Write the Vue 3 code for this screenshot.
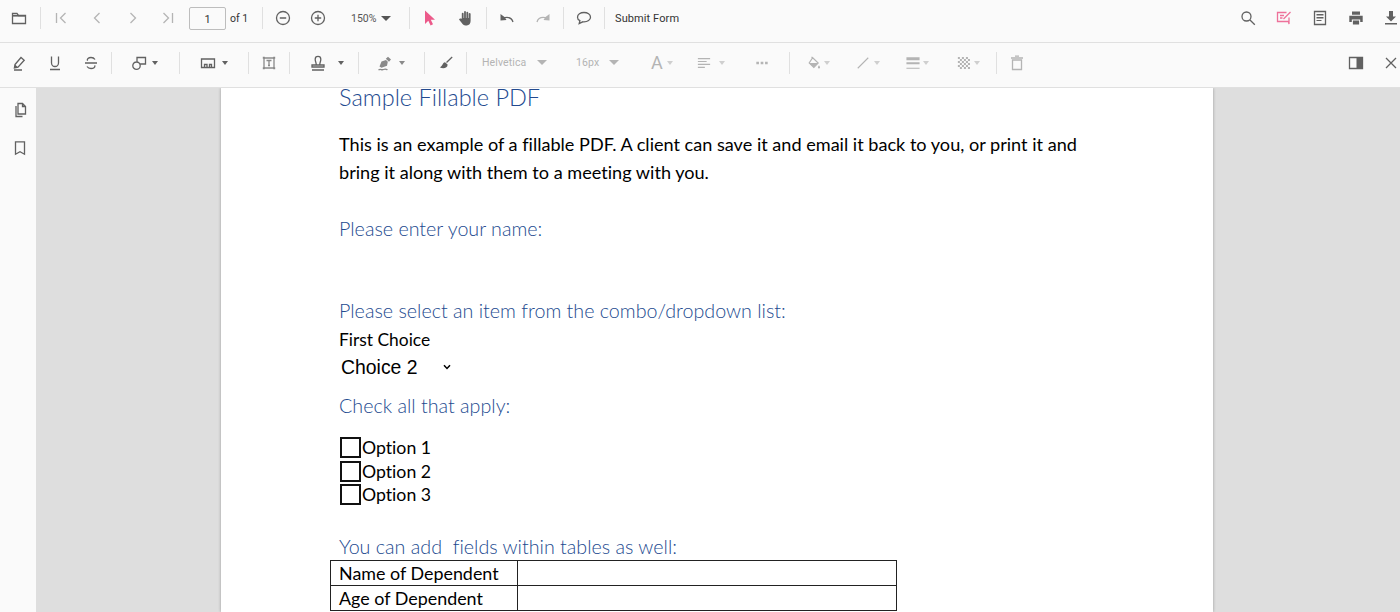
<script setup>
const icons = {
  folder: { s: 'M1.5 13.5V3.5H6L7.5 5.5H14.5V13.5Z', f: 'M1 5h14v1.6H1z' },
  first: { s: 'M3.5 3V13M12.5 3L7.5 8L12.5 13' },
  prev: { s: 'M10.5 3L5.5 8L10.5 13' },
  next: { s: 'M5.5 3L10.5 8L5.5 13' },
  last: { s: 'M12.5 3V13M3.5 3L8.5 8L3.5 13' },
  zoomOut: { s: 'M8 1.5a6.5 6.5 0 1 0 0 13a6.5 6.5 0 1 0 0-13ZM4.8 8H11.2' },
  zoomIn: { s: 'M8 1.5a6.5 6.5 0 1 0 0 13a6.5 6.5 0 1 0 0-13ZM4.8 8H11.2M8 4.8V11.2' },
  cursor: { f: 'M3 .5V14L6.3 10.8L8.6 15.5L11 14.3L8.8 9.8H13Z' },
  hand: { f: 'M3.8 8V3.6a.9.9 0 0 1 1.8 0V8h.5V1.9a.9.9 0 0 1 1.8 0V8h.5V2.6a.9.9 0 0 1 1.8 0V8h.5V4a.95.95 0 0 1 1.9 0V11c0 2.6-1.5 4.4-3.8 4.4H7.6C5.8 15.4 4.8 14.6 3.8 13L1 9.4c.5-1.1 1.7-1.2 2.3-.5Z' },
  undo: { s: 'M14 12C13 8.5 9.5 6.6 4 8', f: 'M1.5 4V10.5L7.5 10L5.5 7Z' },
  redo: { s: 'M2 12C3 8.5 6.5 6.6 12 8', f: 'M14.5 4V10.5L8.5 10L10.5 7Z' },
  comment: { s: 'M8 2.5C4.4 2.5 1.5 4.5 1.5 7.2c0 1.5 1 2.8 2.4 3.5L3.2 13.5L6.8 11.8c.4.1.8.1 1.2.1c3.6 0 6.5-2 6.5-4.7S11.6 2.5 8 2.5Z' },
  search: { s: 'M6.5 2a4.5 4.5 0 1 0 0 9a4.5 4.5 0 1 0 0-9ZM10 10L14.8 14.8' },
  annotate: { s: 'M10.5 2.5H1.5V11.5H12.5L13 14V7.5M4 5.5H8M4 8H6.5M7.5 9L14.5 2' },
  form: { s: 'M2.5 1.5H13.5V14.5H2.5Z', f: 'M4.5 4h7v1.5h-7zM4.5 7h7v1.5h-7zM4.5 10h5v1h-5z' },
  print: { f: 'M4 1.5h8v3.2H4zM1.3 5.7h13.4v6.3h-2.5V9.4H3.8V12H1.3zM4.9 10.5h6.2V14.5H4.9z' },
  download: { f: 'M6 1h4v5.5h3L8 11.5L3 6.5h3zM2 13h12v1.6H2z' },
  highlight: { s: 'M4 9.5L10 2.5L13.2 5.2L7 12.2L3.4 13ZM3 15H11', f: 'M4 9.5L7 12.2L3.4 13Z' },
  underline: { s: 'M4.5 1.5V8a3.5 3.5 0 0 0 7 0V1.5M3 14.5H13' },
  strike: { s: 'M12 4.5C11 3 9.6 2.5 8 2.5c-2.6 0-4.2 1.5-3.5 3.2M2 8H14M4 11.5C5 13 6.4 13.5 8 13.5c2.6 0 4.3-1.2 3.8-3.2' },
  shapes: { s: 'M5.5 7a3.7 3.7 0 1 0 0 7.4a3.7 3.7 0 1 0 0-7.4ZM6 7V2.5H14.5V9H9' },
  image: { s: 'M1.5 4H14.5V12.5H1.5ZM4.5 12V9.5H7V12M7 12V10M9.5 12V9.5H11.5V12' },
  textbox: { s: 'M3 3H13V13H3ZM5.5 5.5H10.5M8 5.5V10.5M7 10.5H9', f: 'M1.8 1.8h2v2h-2zM12.2 1.8h2v2h-2zM1.8 12.2h2v2h-2zM12.2 12.2h2v2h-2z' },
  stamp: { s: 'M6.2 9.5C6.2 7.2 5.2 6.8 5.2 4.2a2.8 2.8 0 0 1 5.6 0C10.8 6.8 9.8 7.2 9.8 9.5M2 10H14V12H2ZM2 15H14' },
  pen: { s: 'M1.5 15C3.5 13.5 4.5 15.5 6.5 14.5S9 14 10.5 14.8', f: 'M2.5 11.5L4.5 6.5L9 5L10.8 6.8L10 10.8L4.5 12.8ZM8.8 3.8L11 1.8L14 4.6L12 6.8Z' },
  brush: { s: 'M14.2 2L8.5 7.5', f: 'M7 7.2C4.3 7.6 5 11 1.8 12.3C5 14.3 9.8 13.2 9.6 9.5Z' },
  align: { s: 'M1 3H15M1 6.3H11M1 9.6H15M1 13H9' },
  dots: { f: 'M1.5 6.5h3v3h-3zM6.5 6.5h3v3h-3zM11.5 6.5h3v3h-3z' },
  bucket: { s: 'M6.5 2L12.8 8L7.8 13L2.5 8ZM5.2 1L7 3', f: 'M2.5 8H12.8L7.8 13ZM13.7 10.5c.8 1.2 1.2 1.9 1.2 2.5a1.2 1.2 0 0 1-2.4 0c0-.6.4-1.3 1.2-2.5Z' },
  line: { s: 'M2 14L14 2' },
  weight: { f: 'M.5 1.5h15v3.4H.5zM.5 7h15v2.4H.5zM.5 13.5h15v1.1H.5z' },
  opacity: { f: 'M1 1h2.3v2.3H1zM5.6 1h2.3v2.3H5.6zM10.2 1h2.3v2.3h-2.3zM3.3 3.3h2.3v2.3H3.3zM7.9 3.3h2.3v2.3H7.9zM12.5 3.3h2.3v2.3h-2.3zM1 5.6h2.3v2.3H1zM5.6 5.6h2.3v2.3H5.6zM10.2 5.6h2.3v2.3h-2.3zM3.3 7.9h2.3v2.3H3.3zM7.9 7.9h2.3v2.3H7.9zM12.5 7.9h2.3v2.3h-2.3zM1 10.2h2.3v2.3H1zM5.6 10.2h2.3v2.3H5.6zM10.2 10.2h2.3v2.3h-2.3zM3.3 12.5h2.3v2.3H3.3zM7.9 12.5h2.3v2.3H7.9zM12.5 12.5h2.3v2.3h-2.3z' },
  trash: { s: 'M3.5 5H12.5V14.5H3.5ZM2 3H14M6 1.2H10' },
  panel: { s: 'M1.5 2.5H14.5V13.5H1.5Z', f: 'M8.5 2.5h6v11h-6z' },
  close: { s: 'M3 3L13 13M13 3L3 13' },
  pages: { s: 'M6 1.5H10.5L13.5 4.5V12H6ZM4 4V14.5H10.5M10.5 1.5V4.5H13.5' },
  bookmark: { s: 'M3.5 1.8H12.5V14.2L8 11.8L3.5 14.2Z' }
}

const sep = { t: 'sep' }
const btn = (icon, w = 36, tone = '') => ({ t: 'btn', icon, w, tone })
const drop = (icon, w, pl, gap, tone = '') => ({ t: 'drop', icon, w, pl, gap, tone })
const txt = (label, w, pl, gap) => ({ t: 'txt', label, w, pl, gap })

const rowOne = [
  btn('folder', 38), sep,
  btn('first', 36, 'dim'), btn('prev', 36, 'dim'), btn('next', 35, 'dim'), btn('last', 36, 'dim'),
  { t: 'page' }, sep,
  btn('zoomOut', 35), btn('zoomIn', 36),
  { t: 'zoom' }, sep,
  btn('cursor', 36, 'pink'), btn('hand'), sep,
  btn('undo'), btn('redo', 36, 'dim'), sep,
  btn('comment'), sep,
  { t: 'submit' }
]
const rowOneEnd = [btn('search'), btn('annotate', 36, 'pink soft'), btn('form'), btn('print'), { t: 'end', icon: 'download' }]

const rowTwo = [
  btn('highlight', 37), btn('underline'), btn('strike'), sep,
  drop('shapes', 63, 17, 5), sep,
  drop('image', 64, 18, 6), sep,
  btn('textbox', 36, 'mid'), sep,
  drop('stamp', 64, 18, 12), sep,
  drop('pen', 61, 16, 6, 'mid'), sep,
  btn('brush', 37), sep,
  txt('Helvetica', 94, 13, 11), txt('16px', 72, 13, 10),
  { t: 'glyph' },
  drop('align', 59, 12, 8, 'dim small'),
  { t: 'btn', icon: 'dots', w: 43, pr: 7, tone: 'dim tiny' }, sep,
  drop('bucket', 54, 15, 3, 'dim small'),
  drop('line', 51, 10, 4, 'dim small'),
  drop('weight', 48, 9, 3, 'dim small'),
  drop('opacity', 49, 12, 3, 'dim small'), sep,
  btn('trash', 36, 'dim')
]
const rowTwoEnd = [btn('panel'), { t: 'end', icon: 'close' }]
const rows = [
  { id: 'one', start: rowOne, end: rowOneEnd },
  { id: 'two', start: rowTwo, end: rowTwoEnd }
]
const widthOf = (i) => ({ width: i.w + 'px', paddingLeft: (i.pl || 0) + 'px', paddingRight: (i.pr || 0) + 'px' })
</script>

<template>
  <div class="viewer">
    <header class="toolbars">
      <div v-for="row in rows" :key="row.id" class="bar" :class="'bar-' + row.id">
        <div v-for="part in [row.start, row.end]" :key="part === row.start ? 's' : 'e'" class="group" :class="{ 'to-end': part === row.end }">
          <template v-for="(i, n) in part" :key="n">
            <span v-if="i.t === 'sep'" class="sep"></span>

            <span v-else-if="i.t === 'btn'" class="item center" :class="i.tone" :style="widthOf(i)">
              <svg class="icon" viewBox="0 0 16 16"><path v-if="icons[i.icon].s" class="st" :d="icons[i.icon].s" /><path v-if="icons[i.icon].f" class="fl" :d="icons[i.icon].f" /></svg>
            </span>

            <span v-else-if="i.t === 'end'" class="item center last-item">
              <svg class="icon" viewBox="0 0 16 16"><path v-if="icons[i.icon].s" class="st" :d="icons[i.icon].s" /><path v-if="icons[i.icon].f" class="fl" :d="icons[i.icon].f" /></svg>
            </span>

            <span v-else-if="i.t === 'drop'" class="item" :class="i.tone" :style="widthOf(i)">
              <svg class="icon" viewBox="0 0 16 16"><path v-if="icons[i.icon].s" class="st" :d="icons[i.icon].s" /><path v-if="icons[i.icon].f" class="fl" :d="icons[i.icon].f" /></svg>
              <i class="caret" :style="{ marginLeft: i.gap + 'px' }"></i>
            </span>

            <span v-else-if="i.t === 'txt'" class="item dim label" :style="widthOf(i)">
              {{ i.label }}<i class="caret wide" :style="{ marginLeft: i.gap + 'px' }"></i>
            </span>

            <span v-else-if="i.t === 'glyph'" class="item dim glyph">A<i class="caret"></i></span>

            <span v-else-if="i.t === 'page'" class="item page-box"><span class="page-input">1</span><span class="of">of 1</span></span>

            <span v-else-if="i.t === 'zoom'" class="item zoom">150%<i class="caret wide"></i></span>

            <span v-else-if="i.t === 'submit'" class="item submit">Submit Form</span>
          </template>
        </div>
      </div>
    </header>

    <div class="body">
      <aside class="side">
        <svg class="icon" viewBox="0 0 16 16"><path class="st" :d="icons.pages.s" /></svg>
        <svg class="icon" viewBox="0 0 16 16"><path class="st" :d="icons.bookmark.s" /></svg>
      </aside>
      <main class="canvas">
        <article class="sheet">
          <h1 class="head first-head">Sample Fillable PDF</h1>
          <p class="para">This is an example of a fillable PDF. A client can save it and email it back to you, or print it and</p>
          <p class="para">bring it along with them to a meeting with you.</p>
          <h2 class="head name-head">Please enter your name:</h2>
          <h2 class="head select-head">Please select an item from the combo/dropdown list:</h2>
          <p class="para choice">First Choice</p>
          <div class="combo">
            <span>Choice 2</span>
            <svg class="chev" viewBox="0 0 8 6"><path d="M1 1.2L4 4.4L7 1.2" /></svg>
          </div>
          <h2 class="head check-head">Check all that apply:</h2>
          <ul class="options">
            <li><span class="box"></span>Option 1</li>
            <li><span class="box"></span>Option 2</li>
            <li><span class="box"></span>Option 3</li>
          </ul>
          <h2 class="head table-head">You can add&nbsp; fields within tables as well:</h2>
          <table class="deps">
            <tbody>
              <tr><td>Name of Dependent</td><td></td></tr>
              <tr><td>Age of Dependent</td><td></td></tr>
            </tbody>
          </table>
        </article>
      </main>
    </div>
  </div>
</template>

<style>
html, body { margin: 0; overflow: hidden; }
</style>

<style scoped>
.viewer {
  width: 1400px;
  height: 612px;
  display: flex;
  flex-direction: column;
  overflow: hidden;
  font-family: Roboto, "Liberation Sans", sans-serif;
  color: #616161;
  background: #fafafa;
}
.toolbars { flex: none; }
.bar {
  display: flex;
  align-items: center;
  background: #fafafa;
  border-bottom: 1px solid #e0e0e0;
}
.bar-one { height: 36px; padding-bottom: 6px; }
.bar-two { height: 39px; padding-bottom: 5px; }
.group { display: flex; align-items: center; height: 100%; }
.to-end { margin-left: auto; }
.item {
  display: flex;
  align-items: center;
  box-sizing: border-box;
  height: 100%;
  flex: none;
}
.center { justify-content: center; }
.sep { flex: none; width: 1px; height: 22px; margin: 0 2px; background: #e0e0e0; }
.icon { width: 16px; height: 16px; flex: none; display: block; }
.st { fill: none; stroke: currentColor; stroke-width: 1.3; }
.fl { fill: currentColor; stroke: none; }
.dim { color: #b4b4b4; }
.mid { color: #8a8a8a; }
.pink { color: #ec5a8a; }
.soft { opacity: .85; }
.small .icon { width: 14px; height: 14px; }
.tiny .icon { width: 14px; height: 14px; }
.last-item { width: 26px; padding-left: 8px; }
.caret {
  display: inline-block;
  width: 0;
  height: 0;
  border-left: 3.5px solid transparent;
  border-right: 3.5px solid transparent;
  border-top: 4px solid currentColor;
  flex: none;
}
.caret.wide { border-left-width: 5px; border-right-width: 5px; border-top-width: 5px; }
.small .caret { color: #cfcfcf; }
.label { font-size: 10.5px; letter-spacing: .1px; }
.glyph { width: 50px; padding-left: 16px; font-size: 18px; }
.glyph .caret { margin-left: 4px; color: #cfcfcf; }
.page-box { width: 74px; padding-left: 3px; }
.page-input {
  box-sizing: border-box;
  width: 37px;
  height: 23px;
  display: flex;
  align-items: center;
  justify-content: center;
  padding-top: 2px;
  border: 1px solid #bdbdbd;
  border-radius: 2px;
  font-size: 11px;
  color: #333;
}
.of { margin-left: 4px; font-size: 10.5px; color: #333; }
.zoom { width: 71px; padding-left: 15px; font-size: 10.5px; color: #555; }
.zoom .caret { margin-left: 5px; }
.submit { padding-left: 8px; font-size: 11px; color: #333; letter-spacing: .1px; }

.body { flex: 1; min-height: 0; display: flex; }
.side {
  flex: none;
  width: 36px;
  box-sizing: border-box;
  padding: 14px 0 0 3px;
  display: flex;
  flex-direction: column;
  align-items: center;
  gap: 22px;
}
.canvas {
  flex: 1;
  min-width: 0;
  background: #dedede;
}
.sheet {
  box-sizing: border-box;
  width: 992px;
  height: 100%;
  margin-left: 185px;
  padding-left: 118px;
  background: #fff;
  box-shadow: 0 0 3px rgba(0, 0, 0, .3);
  clip-path: inset(0 -6px);
  font-family: Lato, "Open Sans", sans-serif;
  font-variant-ligatures: none;
  font-weight: 400;
  color: #000;
}
.head {
  margin: 0;
  font-weight: 300;
  color: #234a8f;
  font-size: 19.7px;
  line-height: 24px;
  white-space: nowrap;
}
.first-head { font-size: 23.5px; line-height: 18px; }
.para { margin: 0; font-size: 18.1px; line-height: 27.5px; white-space: nowrap; }
.first-head + .para { margin-top: 25px; }
.name-head { margin-top: 31px; }
.select-head { margin-top: 58px; }
.choice { margin-top: 4px; line-height: 25px; font-size: 17.4px; }
.combo {
  display: flex;
  align-items: center;
  height: 31px;
  padding: 0 0 1px 2px;
  box-sizing: border-box;
  font-family: "Liberation Sans", Arial, sans-serif;
  font-size: 19.4px;
}
.combo span { width: 102px; }
.chev { width: 8px; height: 6px; }
.chev path { fill: none; stroke: #000; stroke-width: 1.5; }
.check-head { margin-top: 11px; }
.options { list-style: none; margin: 18px 0 0; padding: 0; }
.options li {
  display: flex;
  align-items: center;
  height: 23.6px;
  font-size: 17.7px;
  white-space: nowrap;
}
.box {
  box-sizing: border-box;
  width: 21px;
  height: 21px;
  margin: 0 1px;
  border: 2px solid #111;
  flex: none;
}
.table-head { margin-top: 29px; line-height: 22px; }
.deps {
  margin: 2px 0 0 -9px;
  width: 567px;
  border-collapse: collapse;
  table-layout: fixed;
  font-size: 17.9px;
}
.deps td { height: 24px; padding: 0 0 0 8px; border: 1px solid #222; line-height: 24px; white-space: nowrap; }
.deps td:first-child { width: 178px; }
</style>
